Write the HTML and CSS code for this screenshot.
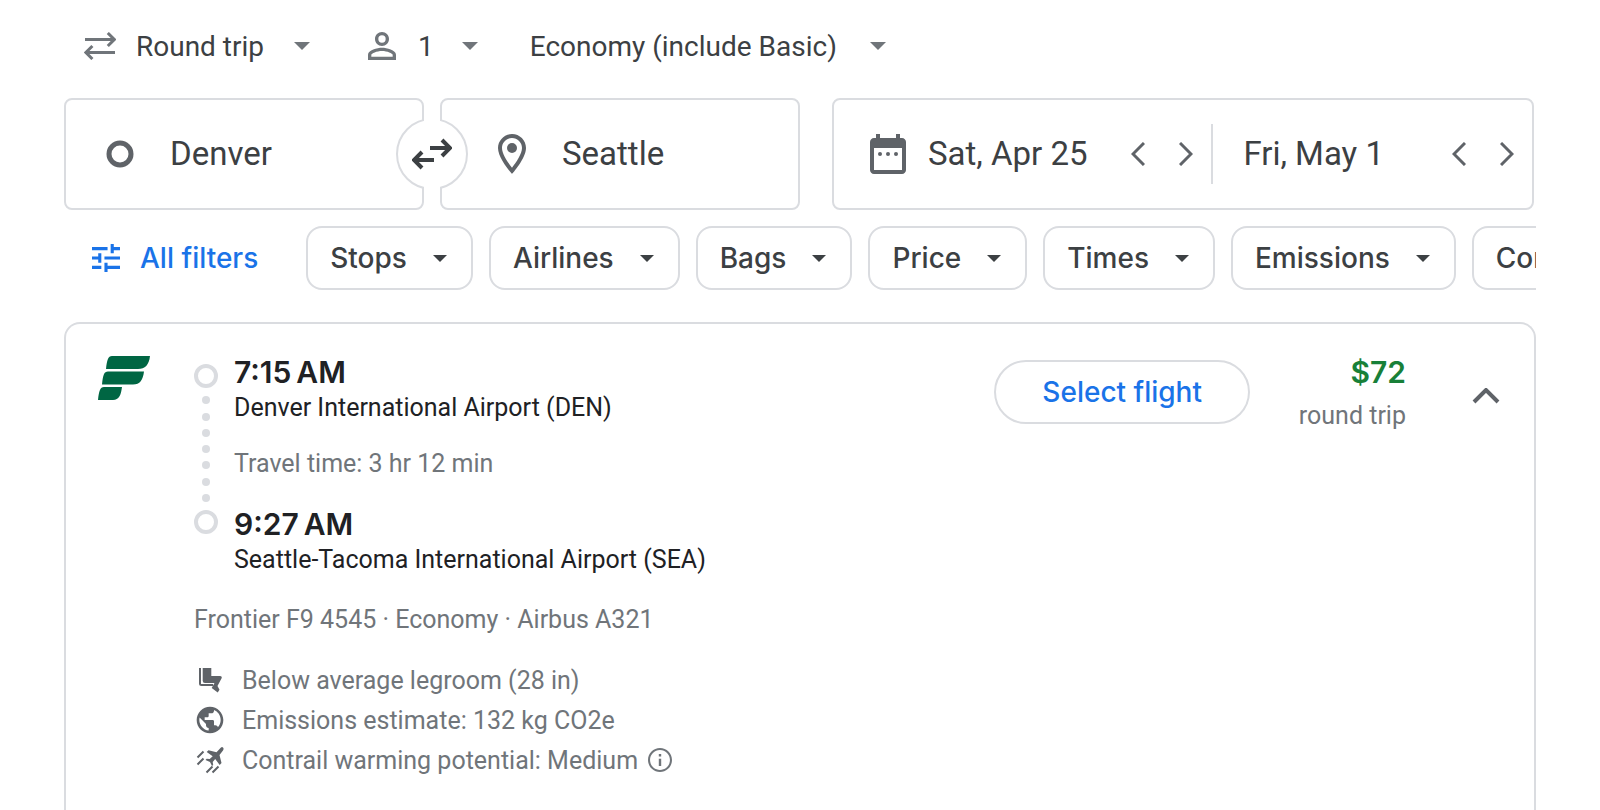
FILE: index.html
```html
<!DOCTYPE html>
<html lang="en">
<head>
    <meta charset="UTF-8">
    <meta name="viewport" content="width=device-width, initial-scale=1.0">
    <title>Flights from Denver to Seattle</title>
    <link rel="stylesheet" href="styles.css">
</head>
<body>
    <main class="page">
        <form class="search">
            <div class="options">
                <label class="option">
                    <svg class="trip-icon" viewBox="0 0 32 28" aria-hidden="true"><path d="M1 7.5H30M23.8 1l6.5 6.5-6.5 6.5M31 20.5H2M8.4 14l-6.5 6.5 6.5 6.5"/></svg>
                    <select class="option-select trip-select" aria-label="Trip type">
                        <option>Round trip</option>
                        <option>One way</option>
                        <option>Multi-city</option>
                    </select>
                    <svg class="caret" viewBox="0 0 16 8" aria-hidden="true"><path d="M0 0h16L8 8z"/></svg>
                </label>
                <button type="button" class="option passengers" aria-label="1 passenger">
                    <svg class="person-icon" viewBox="4 4 16 16" aria-hidden="true"><path d="M12 5.9a2.1 2.1 0 1 1 0 4.2 2.1 2.1 0 0 1 0-4.2m0 9c2.97 0 6.1 1.46 6.1 2.1v1.1H5.9V17c0-.64 3.13-2.1 6.1-2.1M12 4C9.79 4 8 5.79 8 8s1.79 4 4 4 4-1.79 4-4-1.79-4-4-4zm0 9c-2.67 0-8 1.34-8 4v3h16v-3c0-2.66-5.33-4-8-4z"/></svg>
                    <span>1</span>
                    <svg class="caret" viewBox="0 0 16 8" aria-hidden="true"><path d="M0 0h16L8 8z"/></svg>
                </button>
                <label class="option">
                    <select class="option-select cabin-select" aria-label="Cabin">
                        <option>Economy (include Basic)</option>
                        <option>Premium economy</option>
                        <option>Business</option>
                        <option>First</option>
                    </select>
                    <svg class="caret" viewBox="0 0 16 8" aria-hidden="true"><path d="M0 0h16L8 8z"/></svg>
                </label>
            </div>

            <div class="fields">
                <div class="places">
                    <label class="field">
                        <svg class="origin-icon" viewBox="0 0 28 28" aria-hidden="true"><circle cx="14" cy="14" r="11"/></svg>
                        <input class="field-input" type="text" value="Denver" aria-label="Where from?">
                    </label>
                    <label class="field">
                        <svg class="pin-icon" viewBox="5 2 14 20" aria-hidden="true"><path d="M12 2C8.13 2 5 5.13 5 9c0 5.25 7 13 7 13s7-7.75 7-13c0-3.87-3.13-7-7-7zM7 9c0-2.76 2.24-5 5-5s5 2.24 5 5c0 2.88-2.88 7.19-5 9.88C9.92 16.21 7 11.85 7 9z"/><circle cx="12" cy="9" r="2.5"/></svg>
                        <input class="field-input" type="text" value="Seattle" aria-label="Where to?">
                    </label>
                    <button type="button" class="swap" aria-label="Swap origin and destination">
                        <svg class="swap-icon" viewBox="0 0 40 32" aria-hidden="true"><path d="M18 10h19M30 2l8 8-8 8M22 22H3M10 14l-8 8 8 8"/></svg>
                    </button>
                </div>
                <div class="dates">
                    <div class="date">
                        <svg class="calendar-icon" viewBox="3 2 18 20" aria-hidden="true"><path fill-rule="evenodd" d="M6 2h2v2h8V2h2v2h1c1.1 0 2 .9 2 2v14c0 1.1-.9 2-2 2H5c-1.1 0-2-.9-2-2V6c0-1.1.9-2 2-2h1zM5 9v11h14V9z"/><circle cx="8" cy="12" r="1"/><circle cx="12" cy="12" r="1"/><circle cx="16" cy="12" r="1"/></svg>
                        <input class="field-input" type="text" value="Sat, Apr 25" aria-label="Departure">
                        <div class="steps">
                            <button type="button" class="step" aria-label="Earlier departure"><svg viewBox="0 0 14 24" aria-hidden="true"><path d="M13 1L2 12l11 11"/></svg></button>
                            <button type="button" class="step" aria-label="Later departure"><svg viewBox="0 0 14 24" aria-hidden="true"><path d="M1 1l11 11L1 23"/></svg></button>
                        </div>
                    </div>
                    <div class="date">
                        <input class="field-input" type="text" value="Fri, May 1" aria-label="Return">
                        <div class="steps">
                            <button type="button" class="step" aria-label="Earlier return"><svg viewBox="0 0 14 24" aria-hidden="true"><path d="M13 1L2 12l11 11"/></svg></button>
                            <button type="button" class="step" aria-label="Later return"><svg viewBox="0 0 14 24" aria-hidden="true"><path d="M1 1l11 11L1 23"/></svg></button>
                        </div>
                    </div>
                </div>
            </div>
        </form>

        <div class="filters">
            <button type="button" class="all-filters">
                <svg class="tune-icon" viewBox="3 3 18 18" aria-hidden="true"><path d="M3 17v2h6v-2H3zM3 5v2h10V5H3zm10 16v-2h8v-2h-8v-2h-2v6h2zM7 9v2H3v2h4v2h2V9H7zm14 4v-2H11v2h10zm-6-4h2V7h4V5h-4V3h-2v6z"/></svg>
                All filters
            </button>
            <button type="button" class="chip">Stops <svg class="chip-caret" viewBox="0 0 14 7" aria-hidden="true"><path d="M0 0h14L7 7z"/></svg></button>
            <button type="button" class="chip">Airlines <svg class="chip-caret" viewBox="0 0 14 7" aria-hidden="true"><path d="M0 0h14L7 7z"/></svg></button>
            <button type="button" class="chip">Bags <svg class="chip-caret" viewBox="0 0 14 7" aria-hidden="true"><path d="M0 0h14L7 7z"/></svg></button>
            <button type="button" class="chip">Price <svg class="chip-caret" viewBox="0 0 14 7" aria-hidden="true"><path d="M0 0h14L7 7z"/></svg></button>
            <button type="button" class="chip">Times <svg class="chip-caret" viewBox="0 0 14 7" aria-hidden="true"><path d="M0 0h14L7 7z"/></svg></button>
            <button type="button" class="chip">Emissions <svg class="chip-caret" viewBox="0 0 14 7" aria-hidden="true"><path d="M0 0h14L7 7z"/></svg></button>
            <button type="button" class="chip">Connecting airports <svg class="chip-caret" viewBox="0 0 14 7" aria-hidden="true"><path d="M0 0h14L7 7z"/></svg></button>
        </div>

        <article class="flight">
            <svg class="airline-logo" viewBox="0 0 52 44" role="img" aria-label="Frontier"><path d="M14 0H52C51 9 47 13 40 13H8C9 4 10 0 14 0zM10 15.5H46C45 24 42 28.5 35 28.5H4C5 19 6 15.5 10 15.5zM6 31H24C23 39 21 44 15 44H0C1 35 2 31 6 31z"/></svg>
            <div class="details">
                <div class="route">
                    <div class="track">
                        <span class="stop"></span>
                        <span class="dot"></span>
                        <span class="dot"></span>
                        <span class="dot"></span>
                        <span class="dot"></span>
                        <span class="dot"></span>
                        <span class="dot"></span>
                        <span class="dot"></span>
                        <span class="stop"></span>
                    </div>
                    <div class="legs">
                        <p class="time">7:15&#8239;AM</p>
                        <p class="airport">Denver International Airport (DEN)</p>
                        <p class="travel-time">Travel time: 3 hr 12 min</p>
                        <p class="time">9:27&#8239;AM</p>
                        <p class="airport">Seattle-Tacoma International Airport (SEA)</p>
                    </div>
                </div>
                <p class="aircraft">Frontier F9 4545 · Economy · Airbus A321</p>
                <ul class="facts">
                    <li class="fact">
                        <svg class="fact-icon" viewBox="0 0 32 32" aria-hidden="true"><path d="M5 4h2v16h12v2H7.500Q5 22 5 19.500zM8.700 4h8.600v8H26q2.400.2 1.600 2.200L23.500 22l2 3.700-1.800 2.800-6-4.500 2.800-5H11q-2.300 0-2.300-2.300z"/></svg>
                        Below average legroom (28 in)
                    </li>
                    <li class="fact">
                        <svg class="fact-icon" viewBox="0 0 24 24" aria-hidden="true"><path d="M12 2C6.480 2 2 6.480 2 12s4.480 10 10 10 10-4.480 10-10S17.520 2 12 2zm-1 17.930c-3.950-.49-7-3.850-7-7.930 0-.62.08-1.210.21-1.790L9 15v1c0 1.100.9 2 2 2v1.930zm6.900-2.540c-.26-.81-1-1.390-1.900-1.390h-1v-3c0-.55-.45-1-1-1H8v-2h2c.55 0 1-.45 1-1V7h2c1.100 0 2-.9 2-2v-.41c2.930 1.190 5 4.060 5 7.410 0 2.080-.8 3.970-2.100 5.390z"/></svg>
                        Emissions estimate: 132 kg CO2e
                    </li>
                    <li class="fact">
                        <svg class="fact-icon" viewBox="0 0 32 32" aria-hidden="true"><path d="M29 3.500q1.200 1.200 0 3L25.500 11l2 8-1.800 2-4.500-6-2.500 3 .5 3-1.200 1-2-4-4.500-2 1.200-1.200 3 .3 3-2.800-6-4.300 1.800-1.800 8 2 4.200-4.400q1.200-1.200 2.300-.3z"/><path class="trail" d="M3.500 13.500l6-6M3.500 20.500l6-6M12.500 28.500l6-6M18.500 28.500l6-6"/></svg>
                        Contrail warming potential: Medium
                        <button type="button" class="info" aria-label="About contrail warming">
                            <svg viewBox="2 2 20 20" aria-hidden="true"><path d="M11 7h2v2h-2zm0 4h2v6h-2zm1-9C6.480 2 2 6.480 2 12s4.480 10 10 10 10-4.480 10-10S17.520 2 12 2zm0 18.300c-4.600 0-8.300-3.700-8.300-8.300S7.400 3.700 12 3.700s8.300 3.700 8.300 8.300-3.700 8.300-8.300 8.300z"/></svg>
                        </button>
                    </li>
                </ul>
            </div>
            <button type="button" class="select-flight">Select flight</button>
            <div class="fare">
                <p class="price">$72</p>
                <p class="fare-type">round trip</p>
            </div>
            <button type="button" class="collapse" aria-label="Collapse flight details">
                <svg viewBox="0 0 28 16" aria-hidden="true"><path d="M2 14L14 2l12 12"/></svg>
            </button>
        </article>
    </main>
</body>
</html>
```
FILE: styles.css
```css
* {
    box-sizing: border-box;
}

body {
    margin: 0;
    font-family: Roboto, "Liberation Sans", sans-serif;
    font-size: 25px;
    color: #3c4043;
    background-color: #fff;
}

p, ul {
    margin: 0;
    padding: 0;
    list-style: none;
}

button, input, select {
    margin: 0;
    padding: 0;
    border: none;
    background: none;
    font: inherit;
    color: inherit;
}

button {
    cursor: pointer;
}

svg {
    display: block;
    flex-shrink: 0;
    fill: currentColor;
}

.page {
    min-height: 100vh;
    padding: 22px 64px 0;
    display: flex;
    flex-direction: column;
}

/* trip options */

.options {
    height: 48px;
    padding-left: 20px;
    display: flex;
    align-items: center;
    gap: 52px;
    font-size: 28px;
}

.option {
    display: flex;
    align-items: center;
}

.option svg {
    color: #70757a;
}

.option-select {
    appearance: none;
    outline: none;
}

.trip-icon {
    width: 32px;
    height: 28px;
    margin-right: 20px;
    fill: none;
    stroke: currentColor;
    stroke-width: 3;
}

.trip-select {
    width: 158px;
}

.cabin-select {
    width: 340px;
}

.caret {
    width: 16px;
    height: 8px;
}

.passengers {
    padding-left: 6px;
}

.person-icon {
    width: 28px;
    height: 28px;
    margin-right: 22px;
}

.passengers .caret {
    margin-left: 28px;
}

/* places and dates */

.fields {
    margin-top: 28px;
    padding-right: 2px;
    display: grid;
    grid-template-columns: minmax(0, 736fr) minmax(0, 702fr);
    gap: 32px;
    font-size: 33px;
}

.places {
    position: relative;
    display: grid;
    grid-template-columns: repeat(2, minmax(0, 1fr));
    gap: 16px;
}

.field, .dates {
    height: 112px;
    border: 2px solid #dadce0;
    border-radius: 8px;
    display: flex;
    align-items: center;
}

.field {
    padding: 0 40px;
}

.field svg, .date svg {
    color: #5f6368;
}

.field-input {
    flex: 1;
    min-width: 0;
    height: 48px;
    padding-bottom: 2px;
    outline: none;
}

.origin-icon {
    width: 28px;
    height: 28px;
    margin-right: 36px;
    fill: none;
    stroke: currentColor;
    stroke-width: 5;
}

.pin-icon {
    width: 28px;
    height: 40px;
    margin: 0 36px 0 16px;
}

.swap {
    position: absolute;
    top: 20px;
    left: calc(50% - 36px);
    width: 72px;
    height: 72px;
    border: 2px solid #dadce0;
    border-radius: 50%;
    background-color: #fff;
    display: flex;
    align-items: center;
    justify-content: center;
}

/* hides the ring where it crosses the gap between the two boxes */
.swap::before {
    content: "";
    position: absolute;
    top: -2px;
    bottom: -2px;
    left: 26px;
    width: 16px;
    background-color: #fff;
}

.swap-icon {
    position: relative;
    width: 40px;
    height: 32px;
    fill: none;
    stroke: currentColor;
    stroke-width: 4;
}

.date {
    flex: 380 1 0;
    min-width: 0;
    height: 60px;
    padding: 0 18px 0 36px;
    display: flex;
    align-items: center;
}

.date + .date {
    flex-grow: 318;
    padding-left: 30px;
    border-left: 2px solid #dadce0;
}

.calendar-icon {
    width: 36px;
    height: 40px;
    margin-right: 22px;
}

.steps {
    display: flex;
    gap: 34px;
}

.step svg {
    width: 14px;
    height: 24px;
    fill: none;
    stroke: currentColor;
    stroke-width: 3;
}

/* filter chips */

.filters {
    margin-top: 16px;
    display: flex;
    gap: 16px;
    overflow: hidden;
    font-family: Inter, Roboto, sans-serif;
    font-size: 28px;
    font-weight: 500;
}

.all-filters {
    padding: 0 32px 0 28px;
    display: flex;
    align-items: center;
    gap: 20px;
    flex-shrink: 0;
    color: #1a73e8;
}

.tune-icon {
    width: 28px;
    height: 28px;
}

.chip {
    height: 64px;
    padding: 0 24px 0 22px;
    border: 2px solid #dadce0;
    border-radius: 16px;
    display: flex;
    align-items: center;
    gap: 26px;
    flex-shrink: 0;
    white-space: nowrap;
}

.chip-caret {
    width: 14px;
    height: 7px;
}

/* flight card */

.flight {
    flex: 1;
    margin-top: 32px;
    padding: 30px 34px 0 32px;
    border: 2px solid #dadce0;
    border-bottom: none;
    border-radius: 16px 16px 0 0;
    display: flex;
    align-items: flex-start;
    color: #70757a;
}

.airline-logo {
    width: 52px;
    height: 44px;
    margin: 2px 44px 0 0;
    color: #006643;
}

.details {
    flex: 1;
}

.route {
    display: flex;
    gap: 16px;
}

.track {
    height: 180px;
    padding-top: 10px;
    display: flex;
    flex-direction: column;
    align-items: center;
    justify-content: space-between;
}

.stop {
    width: 24px;
    height: 24px;
    border: 4px solid #dadce0;
    border-radius: 50%;
}

.dot {
    width: 8px;
    height: 8px;
    border-radius: 50%;
    background-color: #dadce0;
}

.time, .price {
    font-family: Inter, Roboto, sans-serif;
    font-size: 30px;
    line-height: 36px;
    font-weight: 600;
}

.time, .airport {
    color: #202124;
}

.airport, .travel-time, .aircraft, .fare-type {
    line-height: 36px;
}

.travel-time {
    margin: 20px 0 24px;
}

.aircraft {
    margin-top: 24px;
}

.facts {
    margin-top: 22px;
}

.fact {
    height: 40px;
    display: flex;
    align-items: center;
}

.fact-icon {
    width: 32px;
    height: 32px;
    margin-right: 16px;
    color: #5f6368;
}

.trail {
    fill: none;
    stroke: currentColor;
    stroke-width: 2;
}

.info {
    margin-left: 10px;
}

.info svg {
    width: 24px;
    height: 24px;
}

.select-flight {
    height: 64px;
    margin-top: 6px;
    padding: 0 46px;
    border: 2px solid #dadce0;
    border-radius: 32px;
    font-family: Inter, Roboto, sans-serif;
    font-size: 28px;
    font-weight: 500;
    color: #1a73e8;
}

.fare {
    width: 156px;
    text-align: right;
}

.price {
    margin-bottom: 8px;
    color: #188038;
}

.collapse {
    margin: 34px 0 0 66px;
    color: #5f6368;
}

.collapse svg {
    width: 28px;
    height: 16px;
    fill: none;
    stroke: currentColor;
    stroke-width: 4;
}
```
